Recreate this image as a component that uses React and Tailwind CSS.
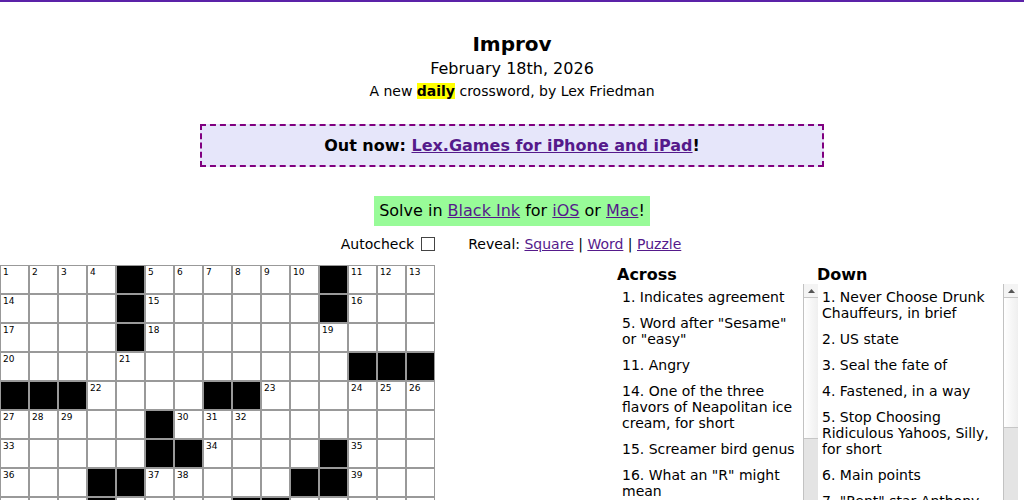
import React from "react";

const TOP = [
  "....#......#...",
  "....#......#...",
  "....#..........",
  "............###",
  "###....##......",
  ".....#.........",
  ".....##....#...",
  "...##.....##...",
];

const ROWS = [
  ...TOP,
  ...TOP.slice(0, 7).reverse().map((r) => r.split("").reverse().join("")),
];

const acrossText = [
  "Indicates agreement",
  'Word after "Sesame" or "easy"',
  "Angry",
  "One of the three flavors of Neapolitan ice cream, for short",
  "Screamer bird genus",
  'What an "R" might mean',
  "Tennis legend Arthur",
  "Comedy style with no script, and this puzzle's theme",
  "Ocean motion",
  "Toward the stern",
  "Large coffee server",
  "Skin care brand",
  "Cereal grain",
  "Chess piece that moves in an L",
  "Prefix with space",
  "Beach sight",
  "Puts on the air",
  "Clean, as a deck",
  "Keep out",
  "Like some dry humor",
  "Garden pest",
  "Bullfight cheer",
  "Squid's squirt",
  "A long, long time",
  "Comic's bit",
  "Unpaid bill",
  "Bread spread",
  "Shady tree",
  "Rink surface",
  "Tiny bit",
  "Pleasant and agreeable",
  "Scatter about",
  "Opposite of WSW",
  "Nest egg letters",
  "Ripped",
];

const downText = [
  "Never Choose Drunk Chauffeurs, in brief",
  "US state",
  "Seal the fate of",
  "Fastened, in a way",
  "Stop Choosing Ridiculous Yahoos, Silly, for short",
  "Main points",
  '"Rent" star Anthony',
  "Pitcher's stat",
  "Snake sound",
  "Gets older",
  "Small island",
  "Poker stake",
  "Opera solo",
  "Sticky stuff",
  "Went by bike",
  "Fish eggs",
  "Like a fox",
  "Dined at home",
  "Lyric poems",
  "Cut of beef",
  "Frozen water",
  "Coastal bird",
  "Desert plant",
  "Unit of force",
  "Back talk",
  "Clear, as a slate",
  "Actress Thurman",
  "Sprinted",
  "Baseball stat",
  "Gardener's tool",
  "Finished",
  "Roof edge",
  "Pub order",
  "Fencing sword",
  "Quick swim",
  "Ballet move",
  "Stitch up",
  "Summer drink",
  "Yes vote",
  "Not off",
  "Flightless bird",
  "Golf peg",
  "Kind of sale",
  "Cozy room",
];

function build() {
  const black = (r, c) => ROWS[r][c] === "#";
  let n = 0;
  const nums = {};
  const across = [];
  const down = [];
  for (let r = 0; r < 15; r++) {
    for (let c = 0; c < 15; c++) {
      if (black(r, c)) continue;
      const a = (c === 0 || black(r, c - 1)) && c < 14 && !black(r, c + 1);
      const d = (r === 0 || black(r - 1, c)) && r < 14 && !black(r + 1, c);
      if (a || d) {
        n++;
        nums[r + "-" + c] = n;
        if (a) across.push(n);
        if (d) down.push(n);
      }
    }
  }
  return { nums, across, down };
}

const { nums, across, down } = build();

const linkCls = "text-[#551a8b] underline";

// the page shows classic scrollbars on the clue lists
const Scrollbar = ({ thumb }) => (
  <div className="flex h-full w-[15px] shrink-0 flex-col border-l border-[#c2c2c2]">
    <div className="flex h-[14px] items-center justify-center border-b border-[#c6c6c6] bg-[#f4f4f4]">
      <svg width="7" height="4" viewBox="0 0 7 4">
        <path d="M0 4 L3.5 0 L7 4 Z" fill="#555" />
      </svg>
    </div>
    <div className={"border-b border-[#c6c6c6] bg-gradient-to-r from-white to-[#efefef] " + thumb} />
    <div className="flex-1 bg-[#e4e4e4]" />
  </div>
);

function ClueList({ title, list, texts, thumb }) {
  return (
    <div className="flex w-[200px] flex-col">
      <div className="-ml-[1px] text-[16px] leading-[19px] font-bold">{title}</div>
      <div className="flex h-[416px]">
        <ul className="flex-1 overflow-hidden">
          {list.map((num, i) => (
            <li key={num} className="py-[5px] pl-[4px] pr-[4px] text-[14px] leading-4">
              {num}. {texts[i] || "Clue"}
            </li>
          ))}
        </ul>
        <Scrollbar thumb={thumb} />
      </div>
    </div>
  );
}

export default function App() {
  return (
    <div
      className="min-h-screen border-t-2 border-[#5b22a8] bg-white text-black"
      style={{ fontFamily: '"DejaVu Sans", sans-serif' }}
    >
      <div className="text-center">
        <h1 className="mt-[30px] text-[20px] leading-[24px] font-bold">Improv</h1>
        <div className="mt-[3px] text-[16px] leading-[20px]">February 18th, 2026</div>
        <div className="mt-[3px] text-[14px] leading-[18px]">
          A new <b className="bg-[#ffff00]">daily</b> crossword, by Lex Friedman
        </div>
        <div className="mx-auto mt-[24px] w-[624px] border-2 border-dashed border-[#800080] bg-[#e6e6fa] py-[10px] text-[16px] leading-[19px] font-bold">
          Out now: <a className={linkCls}>Lex.Games for iPhone and iPad</a>!
        </div>
        <div className="mt-[29px]">
          <span className="inline-block bg-[#98fb98] p-[5px] text-[16px] leading-[20px]">
            Solve in <a className={linkCls}>Black Ink</a> for <a className={linkCls}>iOS</a> or{" "}
            <a className={linkCls}>Mac</a>!
          </span>
        </div>
        <div className="mt-[9px] flex items-center justify-center text-[14px] leading-[18px]">
          <label className="-ml-[2px] flex items-center">
            Autocheck
            <input
              type="checkbox"
              className="ml-[7px] h-[14px] w-[14px] appearance-none border border-[#444] bg-white"
            />
          </label>
          <span className="ml-[33px]">
            Reveal: <a className={linkCls}>Square</a> | <a className={linkCls}>Word</a> |{" "}
            <a className={linkCls}>Puzzle</a>
          </span>
        </div>
      </div>

      <div className="mt-[12px] flex pr-[6px]">
        <div className="grid w-[435px] grid-cols-[repeat(15,29px)]">
          {ROWS.flatMap((row, r) =>
            row.split("").map((ch, c) => (
              <div
                key={r + "-" + c}
                className={
                  "relative h-[29px] w-[29px] border border-[#999] " +
                  (ch === "#" ? "bg-black" : "bg-white")
                }
              >
                {nums[r + "-" + c] && (
                  <span className="absolute left-[2px] top-[1px] text-[9px] leading-[10px]">
                    {nums[r + "-" + c]}
                  </span>
                )}
              </div>
            ))
          )}
        </div>
        <div className="flex-1" />
        <ClueList title="Across" list={across} texts={acrossText} thumb="h-[141px]" />
        <ClueList title="Down" list={down} texts={downText} thumb="h-[130px]" />
      </div>
    </div>
  );
}
